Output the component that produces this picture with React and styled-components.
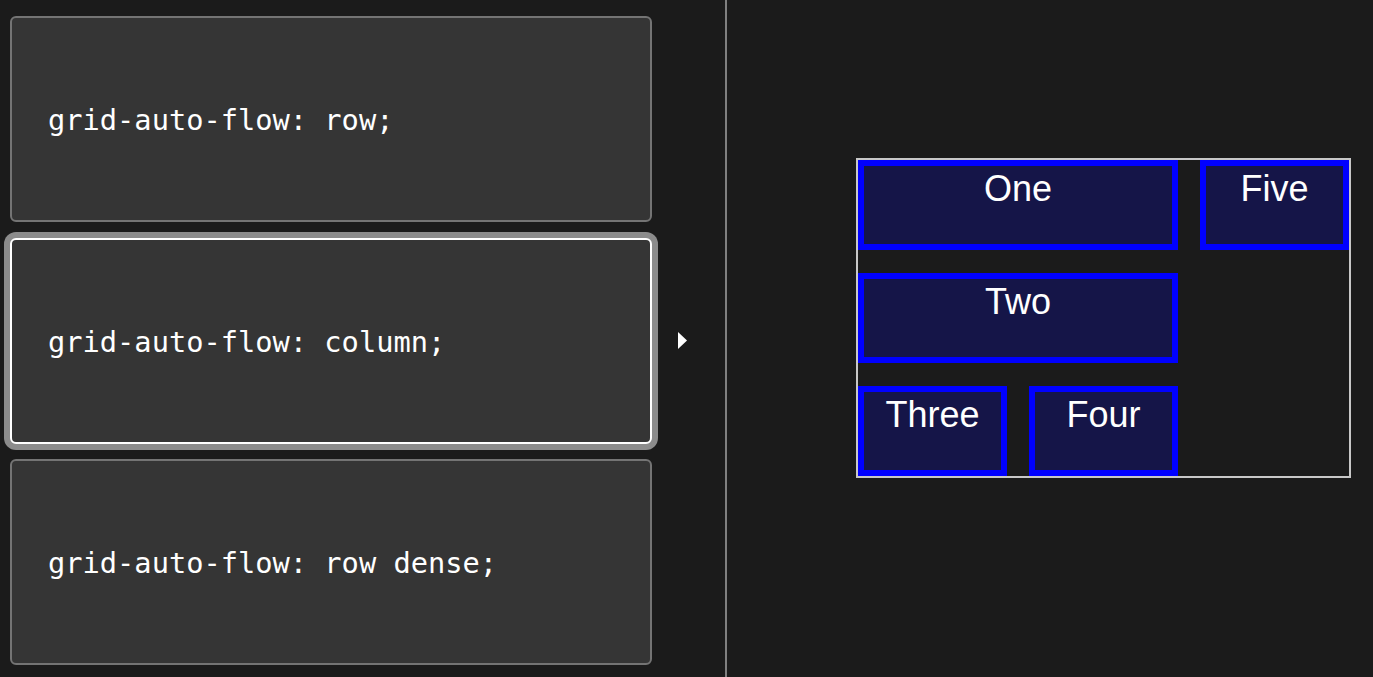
import React from 'react'
import styled, {createGlobalStyle} from 'styled-components'

const choices = [
  'grid-auto-flow: row;',
  'grid-auto-flow: column;',
  'grid-auto-flow: row dense;'
]

const items = ['One', 'Two', 'Three', 'Four', 'Five']

function App() {
  const selected = 1

  return (
    <>
      <GlobalStyle/>
      <Page>
        <Editor>
          <ChoiceList>
            {choices.map((c, i) => (
              <ChoiceRow key={c}>
                <Choice selected={i === selected}>{c}</Choice>
                {i === selected && (
                  <Marker width="9" height="17" viewBox="0 0 9 17">
                    <polygon points="0,0 9,8.5 0,17" fill="#fff"/>
                  </Marker>
                )}
              </ChoiceRow>
            ))}
          </ChoiceList>
        </Editor>
        <Output>
          <ExampleGrid>
            {items.map((name, i) => (
              <Item key={name} wide={i < 2}>{name}</Item>
            ))}
          </ExampleGrid>
        </Output>
      </Page>
    </>
  )
}

export default App

const GlobalStyle = createGlobalStyle`
html, body {
  margin: 0;
  background: #1b1b1b;
}
*{
  box-sizing: border-box;
}
`
const Page = styled.div`
display: flex;
height: 677px;
background: #1b1b1b;
overflow: hidden;
`
const Editor = styled.div`
width: 727px;
flex-shrink: 0;
border-right: 2px solid #808080;
`
const ChoiceList = styled.div`
display: flex;
flex-direction: column;
gap: 15.5px;
padding: 16px 0 0 10px;
`
const ChoiceRow = styled.div`
display: flex;
align-items: center;
`
const Choice = styled.div`
width: 642px;
height: 206px;
flex-shrink: 0;
display: flex;
align-items: center;
padding: 2px 0 0 36px;
background: #353535;
border: 2px solid ${props => props.selected ? '#ffffff' : '#747474'};
border-radius: 6px;
box-shadow: ${props => props.selected ? '0 0 0 6px #8c8c8c' : 'none'};
color: #ffffff;
font-family: "DejaVu Sans Mono", "Liberation Mono", monospace;
font-size: 28.7px;
white-space: pre;
`
const Marker = styled.svg`
margin-left: 26px;
display: block;
`
const Output = styled.div`
flex: 1;
padding: 158px 0 0 129px;
`
const ExampleGrid = styled.div`
width: 495px;
display: grid;
grid-template-columns: repeat(3, 1fr);
grid-template-rows: repeat(3, 90px);
grid-auto-flow: column;
gap: 23px 22px;
border: 2px solid #c8c8c8;
`
const Item = styled.div`
grid-column: auto / span ${props => props.wide ? 2 : 1};
background: rgba(0, 0, 255, 0.2);
border: 6px solid #0000ff;
padding-top: 2px;
color: #ffffff;
text-align: center;
font-family: "Liberation Sans", Arial, sans-serif;
font-size: 36px;
`
